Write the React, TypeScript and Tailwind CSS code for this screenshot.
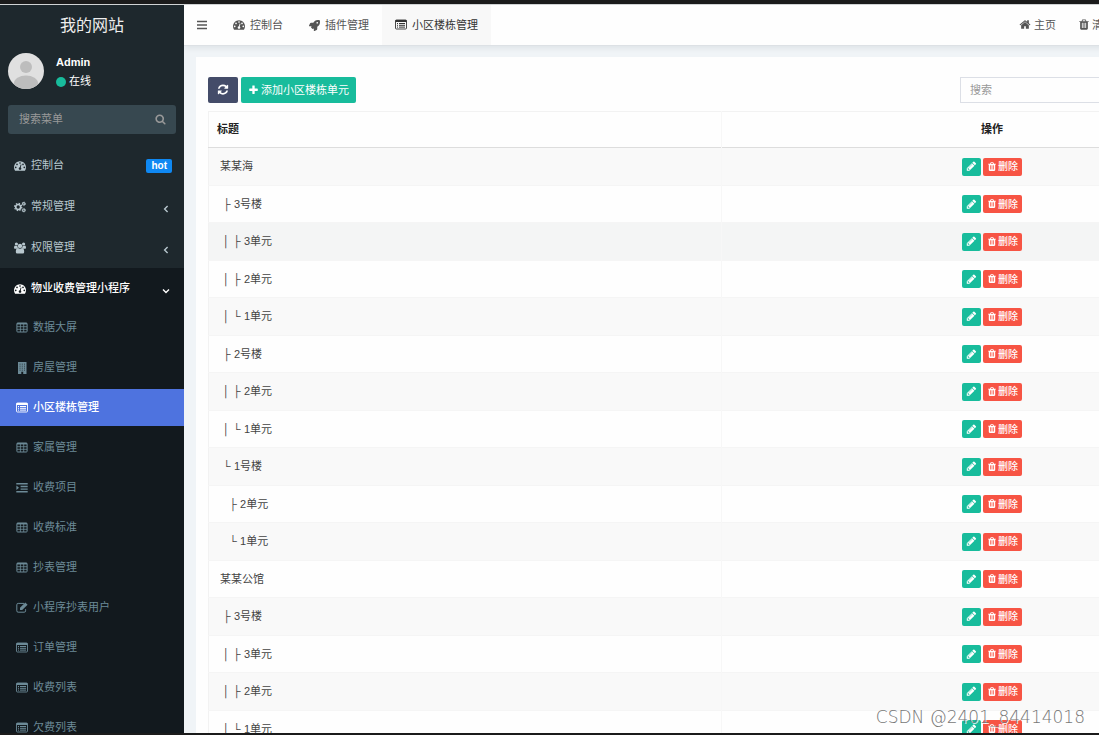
import { FC, ReactNode } from "react";
import { FaRocket } from "react-icons/fa";

interface iconI {
    className?: string;
}

interface menuI {
    label: string;
    icon: ReactNode;
    active?: boolean;
}

const Glyph: FC<iconI & { d: string }> = ({ className = "size-3", d }) => (
    <svg viewBox="0 64 1792 1792" fill="currentColor" aria-hidden="true" className={`shrink-0 ${className}`}>
        <path d={d} />
    </svg>
);

const DashboardIcon: FC<iconI> = ({ className }) => (
    <Glyph className={className} d="M384 1152q0-53-37.5-90.5t-90.5-37.5-90.5 37.5-37.5 90.5 37.5 90.5 90.5 37.5 90.5-37.5 37.5-90.5zm192-448q0-53-37.5-90.5t-90.5-37.5-90.5 37.5-37.5 90.5 37.5 90.5 90.5 37.5 90.5-37.5 37.5-90.5zm428 481l101-382q6-26-7.5-48.5t-38.5-29.5-48 6.5-30 39.5l-101 382q-60 5-107 43.5t-63 98.5q-20 77 20 146t117 89 146-20 89-117q16-60-6-117t-72-91zm660-33q0-53-37.5-90.5t-90.5-37.5-90.5 37.5-37.5 90.5 37.5 90.5 90.5 37.5 90.5-37.5 37.5-90.5zm-640-640q0-53-37.5-90.5t-90.5-37.5-90.5 37.5-37.5 90.5 37.5 90.5 90.5 37.5 90.5-37.5 37.5-90.5zm448 192q0-53-37.5-90.5t-90.5-37.5-90.5 37.5-37.5 90.5 37.5 90.5 90.5 37.5 90.5-37.5 37.5-90.5zm320 448q0 261-141 483-19 29-54 29h-1402q-35 0-54-29-141-221-141-483 0-182 71-348t191-286 286-191 348-71 348 71 286 191 191 286 71 348z" />
);

const RefreshIcon: FC<iconI> = ({ className }) => (
    <Glyph className={className} d="M1639 1056q0 5-1 7-64 268-268 434.5t-478 166.5q-146 0-282.5-55t-243.5-157l-129 129q-19 19-45 19t-45-19-19-45v-448q0-26 19-45t45-19h448q26 0 45 19t19 45-19 45l-137 137q71 66 161 102t187 36q134 0 250-65t186-179q11-17 53-117 8-23 30-23h192q13 0 22.5 9.5t9.5 22.5zm25-800v448q0 26-19 45t-45 19h-448q-26 0-45-19t-19-45 19-45l138-138q-148-137-349-137-134 0-250 65t-186 179q-11 17-53 117-8 23-30 23h-199q-13 0-22.5-9.5t-9.5-22.5v-7q65-268 270-434.5t480-166.5q146 0 284 55.5t245 156.5l130-129q19-19 45-19t45 19 19 45z" />
);

const PlusIcon: FC<iconI> = ({ className }) => (
    <Glyph className={className} d="M1600 736v192q0 40-28 68t-68 28h-416v416q0 40-28 68t-68 28h-192q-40 0-68-28t-28-68v-416h-416q-40 0-68-28t-28-68v-192q0-40 28-68t68-28h416v-416q0-40 28-68t68-28h192q40 0 68 28t28 68v416h416q40 0 68 28t28 68z" />
);

const TrashIcon: FC<iconI> = ({ className }) => (
    <Glyph className={className} d="M704 1376v-704q0-14-9-23t-23-9h-64q-14 0-23 9t-9 23v704q0 14 9 23t23 9h64q14 0 23-9t9-23zm256 0v-704q0-14-9-23t-23-9h-64q-14 0-23 9t-9 23v704q0 14 9 23t23 9h64q14 0 23-9t9-23zm256 0v-704q0-14-9-23t-23-9h-64q-14 0-23 9t-9 23v704q0 14 9 23t23 9h64q14 0 23-9t9-23zm-544-992h448l-48-117q-7-9-17-11h-317q-10 2-17 11zm928 32v64q0 14-9 23t-23 9h-96v948q0 83-47 143.5t-113 60.5h-832q-66 0-113-58.5t-47-141.5v-952h-96q-14 0-23-9t-9-23v-64q0-14 9-23t23-9h309l70-167q15-37 54-63t79-26h320q40 0 79 26t54 63l70 167h309q14 0 23 9t9 23z" />
);

const PencilIcon: FC<iconI> = ({ className }) => (
    <Glyph className={className} d="M491 1536l91-91-235-235-91 91v107h128v128h107zm523-928q0-22-22-22-10 0-17 7l-542 542q-7 7-7 17 0 22 22 22 10 0 17-7l542-542q7-7 7-17zm-54-192l416 416-832 832h-416v-416zm683 96q0 53-37 90l-166 166-416-416 166-165q36-38 90-38 53 0 91 38l235 234q37 39 37 91z" />
);

const HomeIcon: FC<iconI> = ({ className }) => (
    <Glyph className={className} d="M1472 992v480q0 26-19 45t-45 19h-384v-384h-256v384h-384q-26 0-45-19t-19-45v-480q0-1 .5-3t.5-3l575-474 575 474q1 2 1 6zm223-69l-62 74q-8 9-21 11h-3q-13 0-21-7l-692-577-692 577q-12 8-24 7-13-2-21-11l-62-74q-8-10-7-23.5t11-21.5l719-599q32-26 76-26t76 26l244 204v-195q0-14 9-23t23-9h192q14 0 23 9t9 23v408l219 182q10 8 11 21.5t-7 23.5z" />
);

const SearchIcon: FC<iconI> = ({ className }) => (
    <Glyph className={className} d="M1216 832q0-185-131.5-316.5t-316.5-131.5-316.5 131.5-131.5 316.5 131.5 316.5 316.5 131.5 316.5-131.5 131.5-316.5zm512 832q0 52-38 90t-90 38q-54 0-90-38l-343-342q-179 124-399 124-143 0-273.5-55.5t-225-150-150-225-55.5-273.5 55.5-273.5 150-225 225-150 273.5-55.5 273.5 55.5 225 150 150 225 55.5 273.5q0 220-124 399l343 343q37 37 37 90z" />
);

const AngleIcon: FC<iconI> = ({ className }) => (
    <svg viewBox="0 0 12 12" fill="none" stroke="currentColor" strokeWidth="1.4" aria-hidden="true" className={`shrink-0 ${className}`}>
        <path d="M7.6 3L4.6 6l3 3" />
    </svg>
);

const Drawing: FC<{ children: ReactNode }> = ({ children }) => (
    <svg viewBox="0 0 12 12" fill="none" stroke="currentColor" aria-hidden="true" className="size-3 shrink-0">
        {children}
    </svg>
);

const BarsIcon = () => (
    <Drawing>
        <path d="M1 2.5h10M1 6h10M1 9.5h10" strokeWidth="1.5" />
    </Drawing>
);

const TableIcon = () => (
    <Drawing>
        <rect x="0.9" y="1" width="10.2" height="9" rx="0.8" />
        <path d="M1 1.7h10" strokeWidth="1.5" />
        <path d="M1 4.7h10M1 7.3h10M4.4 1.5v8.5M7.7 1.5v8.5" strokeWidth="0.8" />
    </Drawing>
);

const ListAltIcon = () => (
    <Drawing>
        <rect x="0.5" y="1" width="11" height="9" rx="0.9" strokeWidth="0.9" />
        <path d="M0.5 2h11" strokeWidth="2" />
        <path d="M2 4.5h1M4 4.5h6M2 6.3h1M4 6.3h6M2 8.1h1M4 8.1h6" />
    </Drawing>
);

const IndentIcon = () => (
    <Drawing>
        <path d="M0.3 1.8h11.4M4.6 4.5h7.1M4.6 7.1h7.1M0.3 9.8h11.4" strokeWidth="1.4" />
        <path d="M0.4 3.6v4.4L3 5.8z" fill="currentColor" stroke="none" />
    </Drawing>
);

const BuildingIcon = () => (
    <Drawing>
        <path fillRule="evenodd" fill="currentColor" stroke="none" d="M2 0h8.5v12H7.2V9.8H5.3V12H2zM3.6 1.7v.9h.9v-.9zM5.8 1.7v.9h.9v-.9zM8 1.7v.9h.9v-.9zM3.6 3.7v.9h.9v-.9zM5.8 3.7v.9h.9v-.9zM8 3.7v.9h.9v-.9zM3.6 5.7v.9h.9v-.9zM5.8 5.7v.9h.9v-.9zM8 5.7v.9h.9v-.9zM3.6 7.7v.9h.9v-.9zM5.8 7.7v.9h.9v-.9zM8 7.7v.9h.9v-.9z" />
    </Drawing>
);

const EditIcon = () => (
    <Drawing>
        <path d="M8 1.4H2.2Q0.8 1.4 0.8 2.8v6Q0.8 10.2 2.2 10.2h6Q9.6 10.2 9.6 8.8V7.2" strokeWidth="1" />
        <path d="M4 8V5.7L9.3 0.6l2.3 2.2L6.2 8z" fill="currentColor" stroke="none" />
    </Drawing>
);

const CogsIcon = () => (
    <Drawing>
        <circle cx="4.2" cy="6" r="2.5" strokeWidth="1.7" />
        <circle cx="4.2" cy="6" r="3.6" strokeWidth="1.2" strokeDasharray="1.42 1.41" />
        <circle cx="9.8" cy="2.8" r="1.2" strokeWidth="1.1" />
        <circle cx="9.8" cy="2.8" r="1.9" strokeWidth="0.6" strokeDasharray="1 0.99" />
        <circle cx="9.8" cy="9.2" r="1.2" strokeWidth="1.1" />
        <circle cx="9.8" cy="9.2" r="1.9" strokeWidth="0.6" strokeDasharray="1 0.99" />
    </Drawing>
);

const UsersIcon = () => (
    <Drawing>
        <g fill="currentColor" stroke="none">
            <circle cx="2.4" cy="2" r="1.6" />
            <circle cx="9.6" cy="2" r="1.6" />
            <circle cx="6" cy="3.9" r="2.2" />
            <path d="M0 6.1Q0 3.4 1 3.4q1.2.9 2.4.4Q3.4 5 4 5.9L2.8 6.8H.9Q0 6.8 0 6.1zM12 6.1q0-2.7-1-2.7-1.2.9-2.4.4Q8.6 5 8 5.9l1.2.9h1.9q.9 0 .9-.7z" />
            <path d="M1.8 9.9q0-3.9 2.2-3.9 2 1.4 4 0 2.2 0 2.2 3.9 0 1.5-1.5 1.5H3.3q-1.5 0-1.5-1.5z" />
        </g>
    </Drawing>
);

const subMenu: menuI[] = [
    { label: "数据大屏", icon: <TableIcon /> },
    { label: "房屋管理", icon: <BuildingIcon /> },
    { label: "小区楼栋管理", icon: <ListAltIcon />, active: true },
    { label: "家属管理", icon: <TableIcon /> },
    { label: "收费项目", icon: <IndentIcon /> },
    { label: "收费标准", icon: <TableIcon /> },
    { label: "抄表管理", icon: <TableIcon /> },
    { label: "小程序抄表用户", icon: <EditIcon /> },
    { label: "订单管理", icon: <ListAltIcon /> },
    { label: "收费列表", icon: <ListAltIcon /> },
    { label: "欠费列表", icon: <ListAltIcon /> },
];

const tabs: menuI[] = [
    { label: "控制台", icon: <DashboardIcon /> },
    { label: "插件管理", icon: <FaRocket className="size-[11px]" /> },
    { label: "小区楼栋管理", icon: <ListAltIcon />, active: true },
];

// the tree prefix is part of the title, the leading spaces set the depth
const rows = [
    " 某某海",
    "  ├ 3号楼",
    "  │ ├ 3单元",
    "  │ ├ 2单元",
    "  │ └ 1单元",
    "  ├ 2号楼",
    "  │ ├ 2单元",
    "  │ └ 1单元",
    "  └ 1号楼",
    "    ├ 2单元",
    "    └ 1单元",
    " 某某公馆",
    "  ├ 3号楼",
    "  │ ├ 3单元",
    "  │ ├ 2单元",
    "  │ └ 1单元",
];

const Sidebar = () => {
    return (
        <aside className="w-[184px] shrink-0 overflow-hidden bg-[#1e282d] text-[#b8c7ce]">
            <h1 className="h-10 text-center text-base leading-[42px] text-[#eeeeee]">我的网站</h1>
            <div className="flex gap-3 px-2 pt-2">
                <svg viewBox="0 0 36 36" aria-label="Admin" className="size-9 shrink-0 rounded-full bg-[#e0e0e0]">
                    <circle cx="18" cy="14" r="6" fill="#bdbdbd" />
                    <ellipse cx="18" cy="30" rx="12" ry="7.5" fill="#bdbdbd" />
                </svg>
                <div className="text-[11px] leading-[19px] text-white">
                    <p className="font-bold">Admin</p>
                    <p className="flex items-center gap-[3px]">
                        <span className="size-[10px] rounded-full bg-[#18bc9c]"></span>
                        在线
                    </p>
                </div>
            </div>
            <form className="mx-2 mt-[14px] flex h-[29px] items-center rounded-[3px] bg-[#374850] pr-[10px] pl-[11px]">
                <input type="text" aria-label="搜索菜单" placeholder="搜索菜单" className="w-full min-w-0 text-[11px] outline-none placeholder:text-[#999999]" />
                <button type="button" aria-label="搜索" className="text-[#999999]">
                    <SearchIcon className="size-[11px]" />
                </button>
            </form>
            <nav className="mt-[11px] text-[11px]">
                <a href="#" className="flex h-[41px] items-center gap-[5px] pr-3 pl-[14px]">
                    <DashboardIcon />
                    控制台
                    <span className="ml-auto rounded-xs bg-[#0f88f2] px-[5px] text-[10px] leading-[14px] font-bold text-white">hot</span>
                </a>
                <a href="#" className="flex h-[41px] items-center gap-[5px] pr-3 pl-[14px]">
                    <CogsIcon />
                    常规管理
                    <AngleIcon className="mt-1 ml-auto size-3" />
                </a>
                <a href="#" className="flex h-[41px] items-center gap-[5px] pr-3 pl-[14px]">
                    <UsersIcon />
                    权限管理
                    <AngleIcon className="mt-1 ml-auto size-3" />
                </a>
                <div className="bg-[#12191e]">
                    <a href="#" className="flex h-[41px] items-center gap-[5px] pr-3 pl-[14px] font-medium text-white">
                        <DashboardIcon />
                        物业收费管理小程序
                        <AngleIcon className="mt-1 ml-auto size-3 -rotate-90" />
                    </a>
                    <ul>
                        {subMenu.map((item) => (
                            <li key={item.label} className="mb-[3px]">
                                <a href="#" className={`flex h-[37px] items-center gap-[5px] pl-4 ${item.active ? "bg-[#4e73df] font-medium text-white" : "text-[#6c8a97]"}`}>
                                    {item.icon}
                                    {item.label}
                                </a>
                            </li>
                        ))}
                    </ul>
                </div>
            </nav>
        </aside>
    );
};

const Header = () => {
    return (
        <header className="relative flex h-[41px] shrink-0 border-b border-[#dde1e5] bg-[#fefefe] text-[11px] text-[#555555] shadow-[0_2px_6px_rgba(0,21,41,0.08)]">
            <button type="button" aria-label="菜单" className="flex w-9 items-center pl-3">
                <BarsIcon />
            </button>
            <nav className="flex">
                {tabs.map((tab) => (
                    <a key={tab.label} href="#" className={`flex items-center gap-[5px] px-[13px] ${tab.active ? "bg-[#f8f8f8] text-[#333333]" : ""}`}>
                        {tab.icon}
                        {tab.label}
                    </a>
                ))}
            </nav>
            <nav className="ml-auto flex w-[268px] shrink-0 gap-[22px]">
                <a href="#" className="flex items-center gap-[3px]">
                    <HomeIcon />
                    主页
                </a>
                <a href="#" className="flex items-center gap-[2px]">
                    <TrashIcon className="size-3" />
                    清除缓存
                </a>
            </nav>
        </header>
    );
};

const BuildingTable = () => {
    return (
        <table className="mt-2 w-full table-fixed border border-[#f2f2f2] text-[11px] text-[#444444]">
            <thead>
                <tr className="h-9 border-b border-[#dddddd] text-[#222222]">
                    <th className="w-[513px] border-r border-[#f7f7f7] px-2 text-left font-bold">标题</th>
                    <th className="px-2 text-center font-bold">操作</th>
                </tr>
            </thead>
            <tbody>
                {rows.map((title, i) => (
                    <tr key={i} className={`border-b border-[#f5f5f5] odd:h-[38px] even:h-[37px] ${i === 2 ? "bg-[#f4f5f5]" : "odd:bg-[#f9f9f9]"}`}>
                        <td className="border-r border-[#f7f7f7] px-2 whitespace-pre">{title}</td>
                        <td className="px-2">
                            <div className="flex justify-center gap-[2px] text-white">
                                <button type="button" aria-label="编辑" className="flex h-[18px] w-[19px] items-center justify-center rounded-xs bg-[#18bc9c]">
                                    <PencilIcon className="size-[11px]" />
                                </button>
                                <button type="button" className="flex h-[18px] items-center gap-[1px] rounded-xs bg-[#f75444] px-1 text-[10px] font-medium">
                                    <TrashIcon className="size-[10px]" />
                                    删除
                                </button>
                            </div>
                        </td>
                    </tr>
                ))}
            </tbody>
        </table>
    );
};

const App = () => {
    return (
        <div className="relative flex h-screen flex-col overflow-hidden border-t-4 border-b-2 border-[#1b1b1b] font-['Liberation_Sans','Noto_Sans_CJK_SC',sans-serif]">
            <div className="flex min-h-0 flex-1 border-t border-[#d0d3d4]">
                <Sidebar />
                <div className="flex min-w-[1103px] flex-1 flex-col overflow-hidden bg-[#f0f4f7]">
                    <Header />
                    <main className="mx-3 mt-[11px] bg-[#fefefe] p-3 pt-5">
                        <div className="flex h-[26px] gap-[3px] text-[11px] text-white">
                            <button type="button" aria-label="刷新" className="flex w-[30px] items-center justify-center rounded-xs bg-[#444c69]">
                                <RefreshIcon className="size-3" />
                            </button>
                            <button type="button" className="flex items-center gap-[2px] rounded-xs bg-[#18bc9c] px-[7px]">
                                <PlusIcon className="size-[11px]" />
                                添加小区楼栋单元
                            </button>
                            <input type="text" aria-label="搜索" placeholder="搜索" className="ml-auto w-[303px] border border-[#dcdfe6] px-[9px] text-[#444444] outline-none placeholder:text-[#999999]" />
                        </div>
                        <BuildingTable />
                    </main>
                </div>
            </div>
            <p className="absolute right-[14px] bottom-1 font-['DejaVu_Sans',sans-serif] text-[17px] leading-6 font-extralight text-[#777777] [text-shadow:1px_1px_0_#ffffff]">CSDN @2401_84414018</p>
        </div>
    );
};

export default App;
